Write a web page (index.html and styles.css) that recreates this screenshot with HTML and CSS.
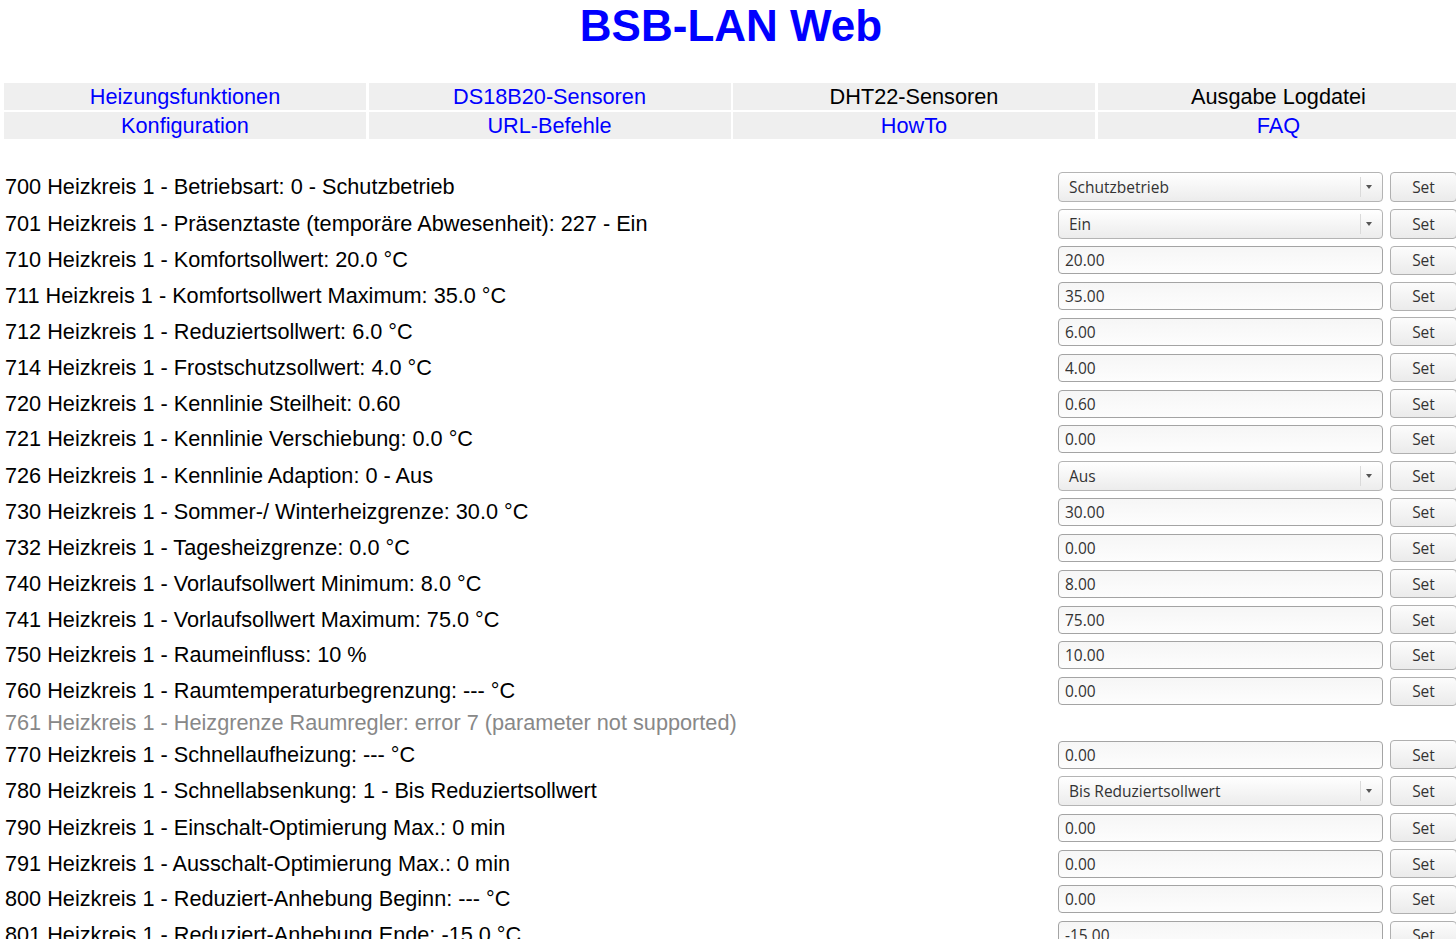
FILE: index.html
```html
<!DOCTYPE html>
<html lang="de">
<head>
<meta charset="utf-8">
<title>BSB-LAN Web</title>
<link rel="stylesheet" href="styles.css">
</head>
<body>
<h1 class="title">BSB-LAN Web</h1>
<nav class="nav">
  <a class="nav-cell link" href="#">Heizungsfunktionen</a>
  <a class="nav-cell link" href="#">DS18B20-Sensoren</a>
  <span class="nav-cell">DHT22-Sensoren</span>
  <span class="nav-cell">Ausgabe Logdatei</span>
  <a class="nav-cell link" href="#">Konfiguration</a>
  <a class="nav-cell link" href="#">URL-Befehle</a>
  <a class="nav-cell link" href="#">HowTo</a>
  <a class="nav-cell link" href="#">FAQ</a>
</nav>
<main class="list">
  <div class="row row-sel"><span class="label">700 Heizkreis 1 - Betriebsart: 0 - Schutzbetrieb</span><div class="ctrl"><div class="sel"><span class="sel-text">Schutzbetrieb</span><span class="sel-arrow"><svg width="6" height="4" viewBox="0 0 6 4"><path d="M0 0h6L3 4z" fill="#555"/></svg></span></div><button class="btn btn-sel">Set</button></div></div>
  <div class="row row-sel"><span class="label">701 Heizkreis 1 - Präsenztaste (temporäre Abwesenheit): 227 - Ein</span><div class="ctrl"><div class="sel"><span class="sel-text">Ein</span><span class="sel-arrow"><svg width="6" height="4" viewBox="0 0 6 4"><path d="M0 0h6L3 4z" fill="#555"/></svg></span></div><button class="btn btn-sel">Set</button></div></div>
  <div class="row"><span class="label">710 Heizkreis 1 - Komfortsollwert: 20.0 °C</span><div class="ctrl"><input class="inp" value="20.00"><button class="btn">Set</button></div></div>
  <div class="row"><span class="label">711 Heizkreis 1 - Komfortsollwert Maximum: 35.0 °C</span><div class="ctrl"><input class="inp" value="35.00"><button class="btn">Set</button></div></div>
  <div class="row"><span class="label">712 Heizkreis 1 - Reduziertsollwert: 6.0 °C</span><div class="ctrl"><input class="inp" value="6.00"><button class="btn">Set</button></div></div>
  <div class="row"><span class="label">714 Heizkreis 1 - Frostschutzsollwert: 4.0 °C</span><div class="ctrl"><input class="inp" value="4.00"><button class="btn">Set</button></div></div>
  <div class="row"><span class="label">720 Heizkreis 1 - Kennlinie Steilheit: 0.60</span><div class="ctrl"><input class="inp" value="0.60"><button class="btn">Set</button></div></div>
  <div class="row"><span class="label">721 Heizkreis 1 - Kennlinie Verschiebung: 0.0 °C</span><div class="ctrl"><input class="inp" value="0.00"><button class="btn">Set</button></div></div>
  <div class="row row-sel"><span class="label">726 Heizkreis 1 - Kennlinie Adaption: 0 - Aus</span><div class="ctrl"><div class="sel"><span class="sel-text">Aus</span><span class="sel-arrow"><svg width="6" height="4" viewBox="0 0 6 4"><path d="M0 0h6L3 4z" fill="#555"/></svg></span></div><button class="btn btn-sel">Set</button></div></div>
  <div class="row"><span class="label">730 Heizkreis 1 - Sommer-/ Winterheizgrenze: 30.0 °C</span><div class="ctrl"><input class="inp" value="30.00"><button class="btn">Set</button></div></div>
  <div class="row"><span class="label">732 Heizkreis 1 - Tagesheizgrenze: 0.0 °C</span><div class="ctrl"><input class="inp" value="0.00"><button class="btn">Set</button></div></div>
  <div class="row"><span class="label">740 Heizkreis 1 - Vorlaufsollwert Minimum: 8.0 °C</span><div class="ctrl"><input class="inp" value="8.00"><button class="btn">Set</button></div></div>
  <div class="row"><span class="label">741 Heizkreis 1 - Vorlaufsollwert Maximum: 75.0 °C</span><div class="ctrl"><input class="inp" value="75.00"><button class="btn">Set</button></div></div>
  <div class="row"><span class="label">750 Heizkreis 1 - Raumeinfluss: 10 %</span><div class="ctrl"><input class="inp" value="10.00"><button class="btn">Set</button></div></div>
  <div class="row"><span class="label">760 Heizkreis 1 - Raumtemperaturbegrenzung: --- °C</span><div class="ctrl"><input class="inp" value="0.00"><button class="btn">Set</button></div></div>
  <div class="row row-err"><span class="label">761 Heizkreis 1 - Heizgrenze Raumregler: error 7 (parameter not supported)</span></div>
  <div class="row"><span class="label">770 Heizkreis 1 - Schnellaufheizung: --- °C</span><div class="ctrl"><input class="inp" value="0.00"><button class="btn">Set</button></div></div>
  <div class="row row-sel"><span class="label">780 Heizkreis 1 - Schnellabsenkung: 1 - Bis Reduziertsollwert</span><div class="ctrl"><div class="sel"><span class="sel-text">Bis Reduziertsollwert</span><span class="sel-arrow"><svg width="6" height="4" viewBox="0 0 6 4"><path d="M0 0h6L3 4z" fill="#555"/></svg></span></div><button class="btn btn-sel">Set</button></div></div>
  <div class="row"><span class="label">790 Heizkreis 1 - Einschalt-Optimierung Max.: 0 min</span><div class="ctrl"><input class="inp" value="0.00"><button class="btn">Set</button></div></div>
  <div class="row"><span class="label">791 Heizkreis 1 - Ausschalt-Optimierung Max.: 0 min</span><div class="ctrl"><input class="inp" value="0.00"><button class="btn">Set</button></div></div>
  <div class="row"><span class="label">800 Heizkreis 1 - Reduziert-Anhebung Beginn: --- °C</span><div class="ctrl"><input class="inp" value="0.00"><button class="btn">Set</button></div></div>
  <div class="row"><span class="label">801 Heizkreis 1 - Reduziert-Anhebung Ende: -15.0 °C</span><div class="ctrl"><input class="inp" value="-15.00"><button class="btn">Set</button></div></div>
</main>
</body>
</html>
```
FILE: styles.css
```css
html, body {
  margin: 0;
  padding: 0;
  overflow: hidden;
  background: #fff;
}
body {
  font-family: "Liberation Sans", Arial, sans-serif;
  color: #000;
  width: 1462px;
}
.title {
  margin: 0;
  height: 52px;
  line-height: 52px;
  font-size: 44px;
  font-weight: bold;
  color: #0000ff;
  text-align: center;
}
.nav {
  display: grid;
  grid-template-columns: repeat(4, 362px);
  column-gap: 2.5px;
  row-gap: 2px;
  margin: 31px 0 0 4px;
}
.nav-cell {
  display: block;
  height: 27px;
  line-height: 27px;
  background: #efefef;
  text-align: center;
  font-size: 21.7px;
  color: #000;
  text-decoration: none;
}
.nav-cell.link {
  color: #0000ff;
}
.list {
  margin-top: 29.5px;
  width: 1456px;
}
.row {
  display: flex;
  align-items: center;
  justify-content: space-between;
  height: 35.8px;
  padding-left: 5px;
}
.row-sel {
  height: 37px;
}
.row-err {
  height: 28px;
}
.row-err .label {
  color: #888;
}
.label {
  font-size: 21.7px;
  white-space: nowrap;
}
.ctrl {
  display: flex;
  align-items: center;
  gap: 7px;
  margin-right: -1px;
}
.sel {
  box-sizing: border-box;
  width: 325px;
  height: 30px;
  border: 1px solid #b4b4b4;
  border-radius: 4px;
  background: linear-gradient(#ffffff, #ececec);
  display: flex;
  align-items: center;
  font-family: "Open Sans", "DejaVu Sans", sans-serif;
  font-size: 15.5px;
  color: #333;
}
.sel-text {
  flex: 1;
  padding-left: 10px;
}
.sel-arrow {
  box-sizing: border-box;
  width: 22px;
  height: 20px;
  padding-left: 5px;
  border-left: 1px solid #dadada;
  display: flex;
  align-items: center;
}
.inp {
  box-sizing: border-box;
  width: 325px;
  height: 28px;
  margin: 0;
  border: 1px solid #a4a4a4;
  border-radius: 4px;
  background: linear-gradient(#f6f6f6, #fdfdfd);
  padding: 0 6px;
  font-family: "Open Sans", "DejaVu Sans", sans-serif;
  font-size: 15.5px;
  color: #333;
  outline: none;
}
.btn {
  box-sizing: border-box;
  width: 67px;
  height: 29px;
  margin: 0;
  padding: 0;
  border: 1px solid #b0b0b0;
  border-radius: 4px;
  background: linear-gradient(#fcfcfc, #ebebeb);
  font-family: "Open Sans", "DejaVu Sans", sans-serif;
  font-size: 15.5px;
  color: #333;
}
.btn-sel {
  height: 30px;
}
```
